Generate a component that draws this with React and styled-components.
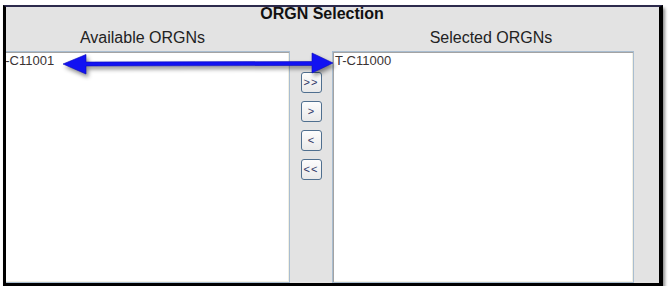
import React from "react";
import styled, { createGlobalStyle } from "styled-components";

const GlobalStyle = createGlobalStyle`
    html, body {
        margin: 0;
        padding: 0;
        background: #ffffff;
    }
    body {
        font-family: "Liberation Sans", Arial, sans-serif;
    }
`;

const Frame = styled.div`
    position: relative;
    box-sizing: border-box;
    width: 660px;
    height: 281px;
    margin: 5px 0 0 3px;
    border-style: solid;
    border-width: 2px 4px 3px 3px;
    border-color: #2c2a4c #000 #000 #000;
    background: #e3e3e3;
    box-shadow: 2px 3px 3px rgba(0, 0, 0, 0.45);
    overflow: hidden;
`;

const Title = styled.div`
    font-size: 16px;
    font-weight: bold;
    line-height: 14px;
    color: #111;
    text-align: center;
    padding-right: 21px;
    margin-bottom: 8px;
`;

const Columns = styled.div`
    display: grid;
    grid-template-columns: 295px 42px 302px;
    row-gap: 4px;
    margin-left: -11px;
`;

const Heading = styled.div`
    font-size: 16px;
    line-height: 18px;
    color: #222;
    text-align: center;
    padding-left: ${(p) => p.$shift || 0}px;
`;

const ListBox = styled.div`
    box-sizing: border-box;
    height: 232px;
    background: #fff;
    border: 1px solid #a9bdd0;
    box-shadow: inset 1px 1px 0 #a3a3a3, inset -1px -1px 0 #f1efe2;
    padding: 2px;
`;

const Item = styled.div`
    font-size: 13px;
    line-height: 14px;
    color: #3a3333;
    white-space: nowrap;
`;

const Mover = styled.div`
    display: flex;
    flex-direction: column;
    align-items: center;
    gap: 8px;
    padding-top: 21px;
`;

const MoveButton = styled.button`
    box-sizing: border-box;
    width: 21px;
    height: 21px;
    padding: 0;
    border: 1px solid #4f6f8f;
    border-radius: 3px;
    background: linear-gradient(#fdfdfd, #e9e9e9);
    font-family: "Liberation Sans", Arial, sans-serif;
    font-size: 11px;
    line-height: 19px;
    color: #2d3566;
    text-align: center;
    letter-spacing: ${(p) => (p.$double ? "1px" : "0")};
`;

const Arrow = styled.svg`
    position: absolute;
    left: 0;
    top: 0;
    width: 340px;
    height: 80px;
    filter: drop-shadow(2px 3px 2px rgba(0, 0, 0, 0.45));
    pointer-events: none;
`;

const App = () => {
    const buttons = [">>", ">", "<", "<<"];
    return (
        <>
            <GlobalStyle />
            <Frame>
                <Title>ORGN Selection</Title>
                <Columns>
                    <Heading>Available ORGNs</Heading>
                    <div />
                    <Heading $shift={16}>Selected ORGNs</Heading>

                    <ListBox>
                        <Item>T-C11001</Item>
                    </ListBox>
                    <Mover>
                        {buttons.map((b) => (
                            <MoveButton key={b} $double={b.length > 1}>{b}</MoveButton>
                        ))}
                    </Mover>
                    <ListBox>
                        <Item>T-C11000</Item>
                    </ListBox>
                </Columns>

                <Arrow viewBox="0 0 340 80">
                    <path
                        d="M57 57 L80 47.5 L80 55 L306 54.5 L306 46 L327 56 L306 66 L306 58.5 L80 59 L80 67 Z"
                        fill="#1212f2"
                        stroke="#0b0bb8"
                        strokeWidth="0.6"
                    />
                </Arrow>
            </Frame>
        </>
    );
};

export default App;
